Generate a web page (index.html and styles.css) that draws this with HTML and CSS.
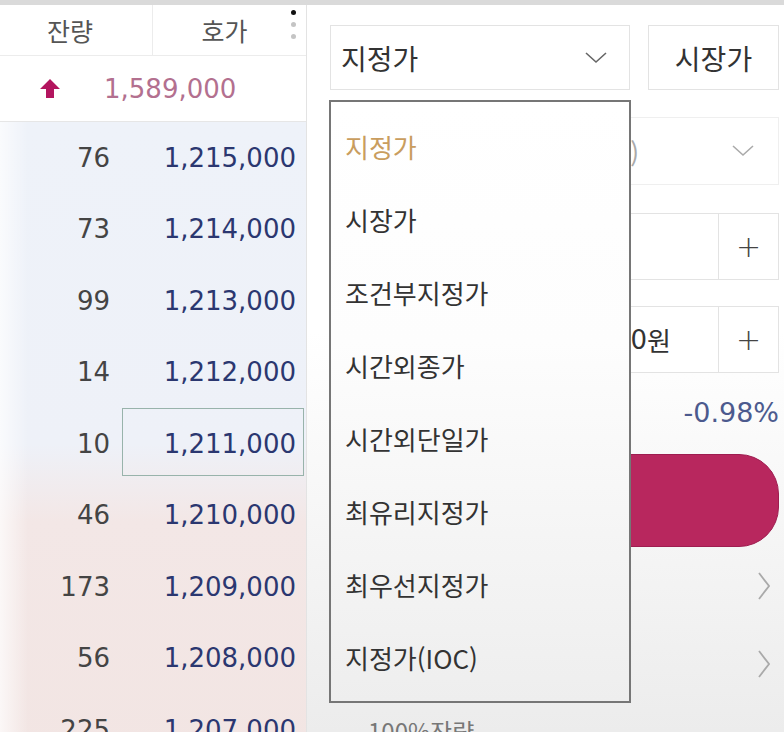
FILE: index.html
```html
<!DOCTYPE html>
<html lang="ko">
<head>
    <meta charset="UTF-8">
    <title>주문</title>
    <link rel="stylesheet" href="styles.css">
</head>
<body>
<div class="topbar"></div>
<div class="screen">
    <div class="book">
        <div class="book-head">
            <div class="head-cell head-qty">잔량</div>
            <div class="head-cell head-price">호가</div>
            <div class="kebab"><i class="on"></i><i></i><i></i></div>
        </div>
        <div class="book-last">
            <svg class="up" width="22" height="22" viewBox="0 0 22 22">
                <path d="M11 1 L21 11 L15 11 L15 20 L7 20 L7 11 L1 11 Z" fill="#b3155f"/>
            </svg>
            <span class="last-price">1,589,000</span>
        </div>
        <div class="rows">
            <div class="row"><div class="qty">76</div><div class="price">1,215,000</div></div>
            <div class="row"><div class="qty">73</div><div class="price">1,214,000</div></div>
            <div class="row"><div class="qty">99</div><div class="price">1,213,000</div></div>
            <div class="row"><div class="qty">14</div><div class="price">1,212,000</div></div>
            <div class="row"><div class="qty">10</div><div class="price on">1,211,000</div></div>
            <div class="row"><div class="qty">46</div><div class="price">1,210,000</div></div>
            <div class="row"><div class="qty">173</div><div class="price">1,209,000</div></div>
            <div class="row"><div class="qty">56</div><div class="price">1,208,000</div></div>
            <div class="row"><div class="qty">225</div><div class="price">1,207,000</div></div>
        </div>
    </div>

    <div class="order">
        <div class="line line-type">
            <div class="pick">
                <span>지정가</span>
                <svg class="chev" width="22" height="12" viewBox="0 0 22 12">
                    <path d="M1 1 L11 10 L21 1" fill="none" stroke="#666" stroke-width="1.6"/>
                </svg>
            </div>
            <div class="btn-market">시장가</div>
        </div>

        <div class="line line-cond">
            <div class="pick pick-wide">
                <span class="muted">현금매수(보통)</span>
                <svg class="chev" width="22" height="12" viewBox="0 0 22 12">
                    <path d="M1 1 L11 10 L21 1" fill="none" stroke="#aaa" stroke-width="1.6"/>
                </svg>
            </div>
        </div>

        <div class="line line-field">
            <div class="field"></div>
            <div class="plus">+</div>
        </div>

        <div class="line line-field line-field2">
            <div class="field"><span class="num">1,211,000</span>원</div>
            <div class="plus">+</div>
        </div>

        <div class="rate">-0.98%</div>

        <div class="buy">매수</div>

        <div class="more">
            <svg width="12" height="28" viewBox="0 0 12 28"><path d="M1 1 L11 14 L1 27" fill="none" stroke="#aaa" stroke-width="1.8"/></svg>
        </div>
        <div class="more">
            <svg width="12" height="28" viewBox="0 0 12 28"><path d="M1 1 L11 14 L1 27" fill="none" stroke="#aaa" stroke-width="1.8"/></svg>
        </div>
        <div class="foot">100%잔량</div>

        <ul class="menu">
            <li class="sel">지정가</li>
            <li>시장가</li>
            <li>조건부지정가</li>
            <li>시간외종가</li>
            <li>시간외단일가</li>
            <li>최유리지정가</li>
            <li>최우선지정가</li>
            <li>지정가(IOC)</li>
        </ul>
    </div>
</div>
</body>
</html>
```

FILE: styles.css
```css
*{
    margin: 0;
    padding: 0;
    box-sizing: border-box;
}
body{
    width: 784px;
    height: 732px;
    overflow: hidden;
    background: #fff;
    font-family: "Noto Sans CJK KR", sans-serif;
    color: #333;
}
.topbar{
    height: 5px;
    background: #dadada;
}
.screen{
    display: flex;
    height: 727px;
}

/* order book */
.book{
    width: 307px;
    border-right: 1px solid #e3e3e3;
    display: flex;
    flex-direction: column;
    overflow: hidden;
}
.book-head{
    flex-shrink: 0;
    height: 51px;
    display: flex;
    border-bottom: 1px solid #ececec;
    font-size: 25px;
    color: #555;
}
.head-cell{
    display: flex;
    align-items: center;
    justify-content: center;
}
.head-qty{
    width: 153px;
    padding-right: 12px;
    border-right: 1px solid #ececec;
}
.head-price{
    flex: 1;
    padding-left: 16px;
}
.kebab{
    width: 26px;
    display: flex;
    flex-direction: column;
    align-items: center;
    padding-top: 5px;
    gap: 7px;
}
.kebab i{
    width: 5px;
    height: 5px;
    border-radius: 50%;
    background: #c4c4c4;
}
.kebab i.on{
    background: #111;
}
.book-last{
    flex-shrink: 0;
    height: 66px;
    display: flex;
    align-items: center;
    padding-left: 39px;
    border-bottom: 1px solid #e6e6e6;
}
.up{
    margin-right: 43px;
}
.last-price{
    font-family: "DejaVu Sans", sans-serif;
    font-size: 26px;
    color: #b3708f;
}
.rows{
    flex-shrink: 0;
    height: 644px;
    background:
        linear-gradient(to right, rgba(255,255,255,.7), rgba(255,255,255,0) 28px),
        linear-gradient(to bottom, #eef2f9 0%, #eef1f8 50%, #f3e7e6 62%, #f2e5e3 100%);
    font-family: "DejaVu Sans", sans-serif;
    font-size: 26px;
}
.row{
    height: 71.5px;
    display: flex;
}
.qty{
    width: 122px;
    padding-right: 12px;
    display: flex;
    align-items: center;
    justify-content: flex-end;
    color: #444;
}
.price{
    flex: 1;
    padding-right: 10px;
    display: flex;
    align-items: center;
    justify-content: flex-end;
    color: #2b3770;
}
.price.on{
    border: 1px solid #98b3ab;
    margin: 0 2px 4px 0;
    padding-right: 7px;
    padding-top: 4px;
}

/* order form */
.order{
    flex: 1;
    position: relative;
    padding: 20px 5px 0 23px;
    background: linear-gradient(to bottom, #fff 0%, #fff 45%, #ececec 100%);
}
.line{
    display: flex;
}
.line-type{
    height: 65px;
}
.pick{
    width: 300px;
    border: 1px solid #e3e3e3;
    background: #fff;
    display: flex;
    align-items: center;
    justify-content: space-between;
    padding: 0 22px 0 10px;
    font-size: 28px;
}
.btn-market{
    width: 131px;
    margin-left: 18px;
    border: 1px solid #e3e3e3;
    background: #fff;
    display: flex;
    align-items: center;
    justify-content: center;
    font-size: 28px;
}
.line-cond{
    height: 68px;
    margin-top: 27px;
}
.pick-wide{
    flex: 1;
    border-color: #efefef;
    padding-right: 24px;
    padding-left: 130px;
    font-size: 26px;
}
.pick-wide .muted{
    margin-left: auto;
    margin-right: 93px;
}
.muted{
    color: #aaa;
}
.line-field{
    height: 67px;
    margin-top: 28px;
}
.line-field2{
    margin-top: 26px;
}
.field{
    flex: 1;
    border: 1px solid #e3e3e3;
    border-right: none;
    background: #fff;
    display: flex;
    align-items: center;
    justify-content: flex-end;
    padding-right: 47px;
    font-size: 26px;
}
.num{
    font-family: "DejaVu Sans", sans-serif;
}
.plus{
    width: 61px;
    border: 1px solid #e3e3e3;
    background: #fff;
    display: flex;
    align-items: center;
    justify-content: center;
    font-family: "DejaVu Sans", sans-serif;
    font-size: 30px;
    font-weight: 300;
    color: #444;
}
.rate{
    margin-top: 20px;
    height: 40px;
    line-height: 40px;
    text-align: right;
    font-family: "DejaVu Sans", sans-serif;
    font-size: 27px;
    color: #4c5a8e;
}
.buy{
    margin-top: 21px;
    height: 93px;
    border-radius: 40px;
    background: #b8275e;
    border: 1px solid #9e1d50;
    color: #fff;
    font-size: 28px;
    display: flex;
    align-items: center;
    justify-content: center;
}
.more{
    height: 78px;
    display: flex;
    align-items: center;
    justify-content: flex-end;
    padding-right: 9px;
}
.more:first-of-type{
    margin-top: 24px;
}
.foot{
    padding: 0 0 0 38px;
    font-size: 24px;
    color: #777;
    line-height: 36px;
    margin-top: 10px;
}

/* dropdown */
.menu{
    position: absolute;
    left: 22px;
    top: 95px;
    width: 302px;
    height: 603px;
    list-style: none;
    border: 2px solid #767676;
    background: linear-gradient(to bottom, #fff 0%, #fdfdfd 40%, #eeeeee 100%);
    padding-top: 8px;
}
.menu li{
    height: 73px;
    display: flex;
    align-items: center;
    padding-left: 14px;
    font-size: 26px;
    color: #333;
}
.menu li.sel{
    color: #c99d5e;
}
```
